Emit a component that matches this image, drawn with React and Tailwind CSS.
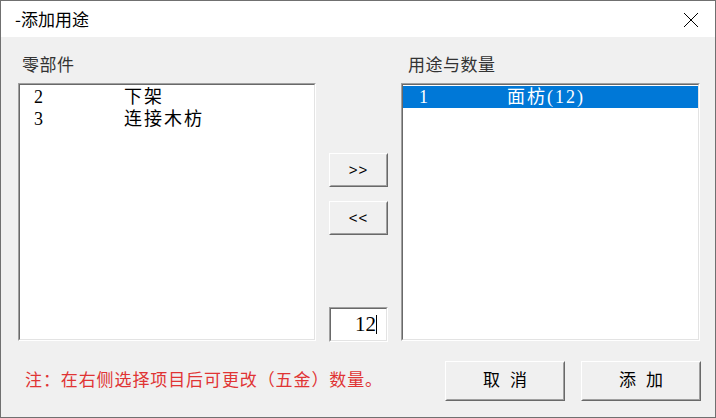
import React from 'react';

// Windows-classic style dialog: add usage / quantity
const Sunken = ({ className = '', children }) => (
    <div className={`border border-t-[#a0a0a0] border-l-[#a0a0a0] border-r-white border-b-white ${className}`}>
        <div className="w-full h-full border border-t-[#696969] border-l-[#696969] border-r-[#e3e3e3] border-b-[#e3e3e3] bg-white">
            {children}
        </div>
    </div>
);

const Raised = ({ className = '', children }) => (
    <div className={`border border-t-white border-l-white border-r-[#696969] border-b-[#696969] ${className}`}>
        <div className="w-full h-full border border-t-[#f0f0f0] border-l-[#f0f0f0] border-r-[#a0a0a0] border-b-[#a0a0a0] bg-[#f0f0f0] flex items-center justify-center">
            {children}
        </div>
    </div>
);

const parts = [
    { no: '2', name: '下架' },
    { no: '3', name: '连接木枋' },
];

const uses = [
    { no: '1', name: '面枋(12)', selected: true },
];

const Row = ({ no, name, selected }) => (
    <div className={`flex h-[22px] items-center text-[18px] tracking-[2px] ${selected ? 'pl-[16px] bg-[#0078d7] text-white' : 'pl-[14px] text-black'}`}>
        <span className={selected ? 'w-[88px]' : 'w-[90px]'}>{no}</span>
        <span>{name}</span>
    </div>
);

export default function App() {
    return (
        <div className="w-[716px] h-[418px] border border-[#707070] bg-[#f0f0f0] flex flex-col font-['Liberation_Serif','Noto_Sans_CJK_SC',serif] overflow-hidden">
            {/* title bar */}
            <div className="h-[36px] bg-white flex items-center justify-between pl-[14px] pr-[16px]">
                <span className="text-[17px] text-black font-['Noto_Sans_CJK_SC',sans-serif]">-添加用途</span>
                <svg width="16" height="16" viewBox="0 0 16 16" className="mt-[1px]">
                    <path d="M1 1 L15 15 M15 1 L1 15" stroke="#000" strokeWidth="1" fill="none" />
                </svg>
            </div>

            {/* lists */}
            <div className="flex pt-[19px] pl-[17px] pr-[15px]">
                <div className="w-[298px]">
                    <div className="h-[20px] leading-[20px] pl-[4px] text-[17px] tracking-[0.5px] text-[#333]">零部件</div>
                    <Sunken className="mt-[7px] h-[258px]">
                        <div className="pt-[1px]">
                            {parts.map(p => <Row key={p.no} {...p} />)}
                        </div>
                    </Sunken>
                </div>

                <div className="w-[59px] mx-[13px] flex flex-col pt-[97px]">
                    <Raised className="h-[34px]">
                        <span className="text-[15px] font-['Liberation_Sans',sans-serif] tracking-[1px] text-black">&gt;&gt;</span>
                    </Raised>
                    <Raised className="h-[34px] mt-[14px]">
                        <span className="text-[15px] font-['Liberation_Sans',sans-serif] tracking-[1px] text-black">&lt;&lt;</span>
                    </Raised>
                    <Sunken className="h-[35px] mt-[72px]">
                        <div className="h-full flex items-center justify-end pr-[9px] text-[21px] text-black">
                            <span>12</span>
                            <span className="w-px h-[19px] bg-black" />
                        </div>
                    </Sunken>
                </div>

                <div className="w-[299px]">
                    <div className="h-[20px] leading-[20px] pl-[7px] text-[17px] tracking-[0.5px] text-[#333]">用途与数量</div>
                    <Sunken className="mt-[7px] h-[258px]">
                        <div className="pt-[1px]">
                            {uses.map(u => <Row key={u.no} {...u} />)}
                        </div>
                    </Sunken>
                </div>
            </div>

            {/* footer */}
            <div className="flex items-center mt-[19px] pl-[24px] pr-[14px]">
                <div className="flex-1 text-[17px] tracking-[0.9px] text-[#e03434]">注：在右侧选择项目后可更改（五金）数量。</div>
                <Raised className="w-[120px] h-[40px]">
                    <div className="flex gap-[10px] text-[17px] text-black">
                        <span>取</span>
                        <span>消</span>
                    </div>
                </Raised>
                <Raised className="w-[120px] h-[40px] ml-[16px]">
                    <div className="flex gap-[10px] text-[17px] text-black">
                        <span>添</span>
                        <span>加</span>
                    </div>
                </Raised>
            </div>
        </div>
    );
}
